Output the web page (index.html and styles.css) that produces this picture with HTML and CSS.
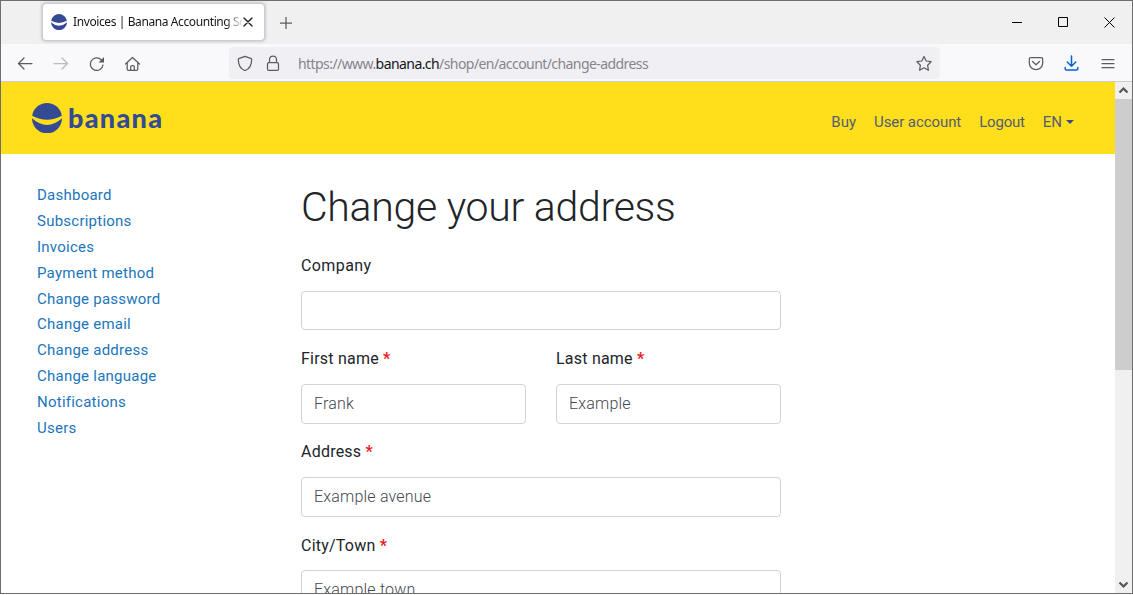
FILE: index.html
```html
<!DOCTYPE html>
<html lang="en">
<head>
<meta charset="utf-8">
<title>Invoices | Banana Accounting Software</title>
<link rel="stylesheet" href="styles.css">
</head>
<body>
<div class="window">
  <div class="tabstrip">
    <div class="tab">
      <svg class="favicon" viewBox="0 0 30 30"><path d="M.18 12.700A15 15 0 0 1 29.820 12.700Q15 20.700 .18 12.700Z"/><path d="M0 15.300Q15 28.700 30 15.300A15 15 0 0 1 0 15.300Z"/></svg>
      <span class="tab-title">Invoices | Banana Accounting So</span>
      <svg class="tab-close" viewBox="0 0 10 10"><path d="M1 1l8 8M9 1l-8 8"/></svg>
    </div>
    <svg class="new-tab" viewBox="0 0 12 12"><path d="M6 0v12M0 6h12"/></svg>
    <div class="controls">
      <svg viewBox="0 0 11 11"><path d="M0 5.500h10"/></svg>
      <svg viewBox="0 0 11 11"><path d="M.5.5h9v9h-9z"/></svg>
      <svg viewBox="0 0 11 11"><path d="M.5.5l10 10M10.500.5l-10 10"/></svg>
    </div>
  </div>
  <div class="toolbar">
    <div class="nav-icons">
      <svg viewBox="0 0 16 16"><path d="M15 8.500H1.500M7 3L1.500 8.500 7 14"/></svg>
      <svg class="disabled" viewBox="0 0 16 16"><path d="M1 8.500h13.500M9 3L14.500 8.500 9 14"/></svg>
      <svg viewBox="0 0 16 16"><path d="M14 10a6.300 6.300 0 1 1-1.800-5.300L14 6.500"/><path class="solid" d="M15 2v5.500H9.500z"/></svg>
      <svg viewBox="0 0 16 16"><path d="M.5 9l7-6.500L14.500 9M2.200 8v6q0 1.300 1.300 1.300h8q1.300 0 1.300-1.300V8M5.700 15V11.800q0-1.300 1.300-1.300h1q1.300 0 1.300 1.300V15"/></svg>
    </div>
    <div class="urlbar">
      <svg viewBox="0 0 16 16"><path d="M8 1.300l6.300 2.400q.4.200.4.700C14.700 9.500 12 14 8 15.600 4 14 1.300 9.500 1.300 4.400q0-.5.4-.7z"/></svg>
      <svg viewBox="0 0 16 16"><rect x="2.500" y="7.600" width="11" height="7.800" rx="1.500"/><path d="M4.500 7.300V4.500a3.500 3.500 0 0 1 7 0V7.300"/></svg>
      <span class="url">https://www.<b>banana.ch</b>/shop/en/account/change-address</span>
      <svg viewBox="0 0 16 16"><path d="M8 1.500l2.200 4.500 4.900.7-3.500 3.500.8 5L8 12.800l-4.400 2.400.8-5L.9 6.700l4.900-.7z"/></svg>
    </div>
    <div class="actions">
      <svg viewBox="0 0 16 16"><path d="M2.700 2.500h10.600q1.400 0 1.400 1.400V8a6.700 6.700 0 0 1-13.400 0V3.900Q1.300 2.500 2.700 2.500zM4.500 6.500L8 9.800 11.500 6.500"/></svg>
      <svg class="download" viewBox="0 0 16 16"><path d="M7.500 1v10.300M3.200 7L7.500 11.300l4.300-4.300M1.200 12.500v1.300q0 1.200 1.200 1.200h10.200q1.200 0 1.200-1.200V12.500"/></svg>
      <svg viewBox="0 0 16 16"><path d="M2 4.500h12M2 8.500h12M2 12.500h12"/></svg>
    </div>
  </div>
  <div class="viewport">
    <div class="page">
      <header class="site-header">
        <div class="brand">
          <svg viewBox="0 0 30 30"><path d="M.18 12.700A15 15 0 0 1 29.820 12.700Q15 20.700 .18 12.700Z"/><path d="M0 15.300Q15 28.700 30 15.300A15 15 0 0 1 0 15.300Z"/></svg>
          <span>banana</span>
        </div>
        <nav class="top-nav">
          <a>Buy</a><a class="user">User account</a><a class="logout">Logout</a><a class="lang">EN<i class="caret"></i></a>
        </nav>
      </header>
      <div class="content">
        <nav class="side-nav">
          <a>Dashboard</a><a>Subscriptions</a><a>Invoices</a><a>Payment method</a><a>Change password</a><a>Change email</a><a>Change address</a><a>Change language</a><a>Notifications</a><a>Users</a>
        </nav>
        <main class="form">
          <h1>Change your address</h1>
          <div class="field first"><label>Company</label><div class="input"></div></div>
          <div class="row">
            <div class="field"><label>First name <em>*</em></label><div class="input">Frank</div></div>
            <div class="field"><label>Last name <em>*</em></label><div class="input">Example</div></div>
          </div>
          <div class="field"><label>Address <em>*</em></label><div class="input">Example avenue</div></div>
          <div class="field city"><label>City/Town <em>*</em></label><div class="input">Example town</div></div>
        </main>
      </div>
    </div>
    <div class="scrollbar">
      <svg viewBox="0 0 17 17"><path d="M4.500 10.500l4-4 4 4"/></svg>
      <div class="thumb"></div>
      <svg class="down" viewBox="0 0 17 17"><path d="M4.500 6.500l4 4 4-4"/></svg>
    </div>
  </div>
</div>
</body>
</html>
```
FILE: styles.css
```css
* { box-sizing: border-box; }
body { margin: 0; overflow: hidden; background: #fff; font-family: Roboto, "Liberation Sans", sans-serif; }
svg { display: block; flex: none; fill: none; stroke: #5b5b66; stroke-width: 1.25; stroke-linejoin: round; stroke-linecap: round; }
.window { width: 1133px; height: 594px; border: 1px solid #6e6e6e; display: flex; flex-direction: column; overflow: hidden; }

.tabstrip { height: 43px; flex: none; background: #f0f0f0; display: flex; align-items: center; padding-left: 41px; }
.tab { width: 223px; height: 38px; margin-bottom: 1px; background: #fff; border: 1px solid #ccccd4; border-radius: 4px; box-shadow: 0 0 3px rgba(100, 100, 120, .5); display: flex; align-items: center; padding: 0 11px 0 8px; }
.favicon { width: 16px; height: 16px; fill: #354a94; stroke: none; }
.tab-title { margin-left: 6px; width: 169px; white-space: nowrap; font: 12px/18px "Noto Sans", sans-serif; letter-spacing: -.4px; color: #15141a; -webkit-mask-image: linear-gradient(to right, #000 152px, transparent 171px); mask-image: linear-gradient(to right, #000 152px, transparent 171px); }
.tab-close { width: 10px; height: 10px; margin-left: 1px; stroke: #15141a; }
.new-tab { width: 12px; height: 12px; margin-left: 15px; }
.controls { margin-left: auto; display: flex; gap: 35px; padding-right: 17px; }
.controls svg { width: 11px; height: 11px; stroke: #000; stroke-width: 1; stroke-linecap: butt; stroke-linejoin: miter; }

.toolbar { height: 38px; flex: none; background: #f9f9fb; border-bottom: 1px solid #ccccd0; display: flex; align-items: center; }
.toolbar svg { width: 16px; height: 16px; }
.toolbar .solid { fill: #5b5b66; stroke: none; }
.nav-icons { width: 228px; padding-left: 16px; display: flex; gap: 20px; }
.toolbar .disabled { opacity: .4; }
.urlbar { width: 711px; height: 32px; margin-top: 1px; background: #f0f0f4; border-radius: 4px; display: flex; align-items: center; padding: 0 8px; gap: 12px; }
.url { flex: 1; padding: 2px 0 0 5px; font: 14px/20px "Noto Sans", sans-serif; letter-spacing: -.57px; color: #85858d; white-space: nowrap; }
.url b { font-weight: 400; color: #15141a; }
.actions { display: flex; gap: 20px; margin-left: 88px; }
.toolbar .download { stroke: #0560df; stroke-width: 1.5; }

.viewport { flex: 1; min-height: 0; display: flex; }
.page { flex: 1; overflow: hidden; }
.site-header { height: 72px; background: #ffdf1b; display: flex; align-items: center; justify-content: space-between; padding: 0 41px 0 31px; }
.brand { display: flex; align-items: center; gap: 6px; color: #354a94; font: 900 27px/30px Lato, sans-serif; letter-spacing: 1.3px; }
.brand svg { width: 30px; height: 30px; fill: #354a94; stroke: none; }
.top-nav { display: flex; gap: 18px; font-size: 15px; line-height: 24px; color: #555c75; padding-top: 7px; white-space: nowrap; }
.user { letter-spacing: -.08px; }
.logout { letter-spacing: -.2px; }
.lang { display: flex; align-items: center; gap: 4px; }
.caret { border: 4px solid transparent; border-top-color: #354a94; border-bottom: 0; }
.content { display: flex; padding: 28px 0 0 36px; }
.side-nav { width: 264px; padding-top: 1px; display: flex; flex-direction: column; font-size: 15px; line-height: 25.87px; color: #1b75bb; letter-spacing: .24px; }
.form { width: 480px; color: #212529; }
h1 { margin: 0; font-size: 41px; line-height: 50px; font-weight: 300; letter-spacing: -.28px; white-space: nowrap; }
.field { flex: 1; }
.field label { display: block; font-size: 16px; line-height: 26px; letter-spacing: .22px; padding-top: 15px; height: 53px; }
.row label { height: 54px; padding-top: 16px; }
.first label { height: 59px; padding-top: 21px; letter-spacing: .4px; }
.city label { padding-top: 16px; }
.field em { font-style: normal; font-weight: 700; color: #f01818; }
.input { height: 40px; border: 1px solid #ced4da; border-radius: 4px; padding: 0 12px; font-size: 16px; line-height: 37px; letter-spacing: .2px; font-weight: 300; color: #3f474f; }
.first .input { height: 39px; }
.row { display: flex; gap: 30px; }
.scrollbar { width: 17px; background: #f0f0f0; display: flex; flex-direction: column; }
.scrollbar svg { width: 17px; height: 17px; stroke: #555; stroke-width: 2.2; stroke-linecap: butt; stroke-linejoin: miter; }
.thumb { height: 271px; background: #cdcdcd; }
.down { margin-top: auto; }
```
